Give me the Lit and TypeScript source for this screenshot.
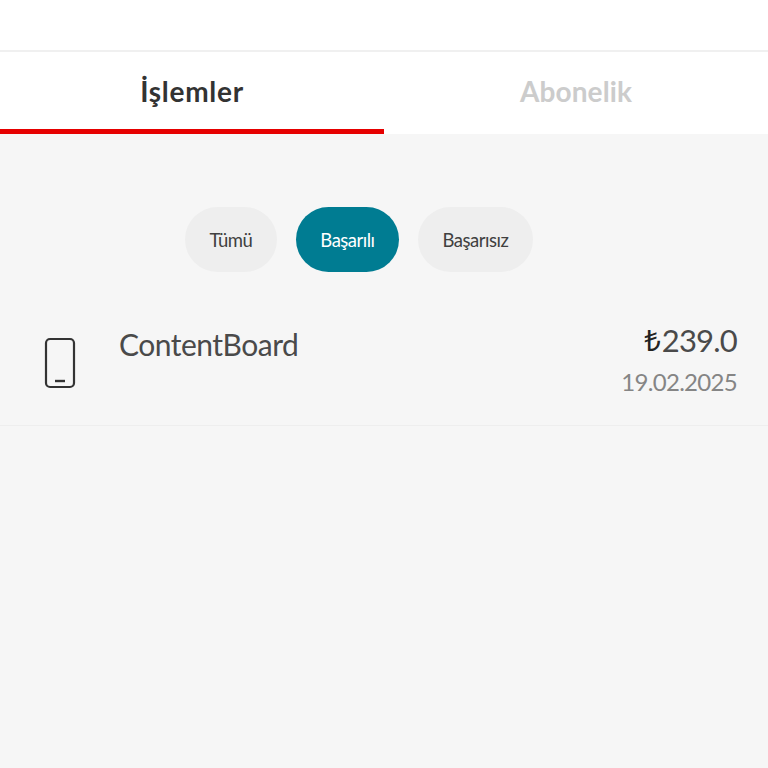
import { LitElement, html, css } from 'lit';
import { customElement } from 'lit/decorators.js';

@customElement('app-root')
export class AppRoot extends LitElement {
  static styles = css`
    :host {
      display: block;
      height: 768px;
      overflow: hidden;
      background: #f6f6f6;
      font-family: 'Lato', 'Noto Sans', sans-serif;
      color: #333;
    }
    .topbar {
      height: 50px;
      background: #fff;
      border-bottom: 2px solid #f0f0f0;
    }
    .tabs {
      display: flex;
      height: 82px;
      background: #fff;
    }
    .tab {
      flex: 1;
      display: flex;
      align-items: center;
      justify-content: center;
      box-sizing: border-box;
      font-size: 28px;
      font-weight: 700;
      letter-spacing: 0.1px;
      color: #ccc;
      border-bottom: 5px solid transparent;
    }
    .tab.active {
      letter-spacing: 0.7px;
      color: #333;
      border-bottom-color: #e60000;
    }
    .filters {
      display: flex;
      gap: 19px;
      padding: 73px 0 0 185px;
    }
    .pill {
      height: 65px;
      padding: 0 24.5px;
      display: flex;
      align-items: center;
      border-radius: 33px;
      background: #eee;
      font-size: 18.5px;
      letter-spacing: -0.5px;
      color: #404040;
    }
    .pill.active {
      background: #007c92;
      color: #fff;
    }
    .row {
      display: flex;
      height: 154px;
      box-sizing: border-box;
      border-bottom: 1px solid #eeeeee;
      padding: 51px 31px 0 44px;
    }
    .row svg {
      margin-top: 14px;
      flex: none;
    }
    .name {
      flex: 1;
      margin-left: 43px;
      font-size: 30px;
      line-height: 42px;
      letter-spacing: -0.5px;
      color: #4a4a4a;
    }
    .side {
      display: flex;
      flex-direction: column;
      align-items: flex-end;
    }
    .amount {
      display: flex;
      align-items: center;
      gap: 1px;
      font-size: 31px;
      line-height: 34px;
      letter-spacing: -0.8px;
      color: #4a4a4a;
    }
    .lira {
      font-family: 'Noto Sans', sans-serif;
      font-size: 29px;
      letter-spacing: 0;
      color: #222;
    }
    .date {
      margin-top: 7px;
      font-size: 24px;
      line-height: 36px;
      letter-spacing: -0.7px;
      color: #858585;
    }
  `;

  render() {
    return html`
      <div class="topbar"></div>
      <div class="tabs">
        <div class="tab active">İşlemler</div>
        <div class="tab">Abonelik</div>
      </div>
      <div class="filters">
        <div class="pill">Tümü</div>
        <div class="pill active">Başarılı</div>
        <div class="pill">Başarısız</div>
      </div>
      <div class="row">
        <svg width="32" height="52" viewBox="0 0 32 52" fill="none" stroke="#333" stroke-width="2.2">
          <rect x="2" y="2" width="28" height="48" rx="4"></rect>
          <path d="M11 44h10" stroke-width="2.4"></path>
        </svg>
        <div class="name">ContentBoard</div>
        <div class="side">
          <div class="amount"><span class="lira">₺</span>239.0</div>
          <div class="date">19.02.2025</div>
        </div>
      </div>
    `;
  }
}
